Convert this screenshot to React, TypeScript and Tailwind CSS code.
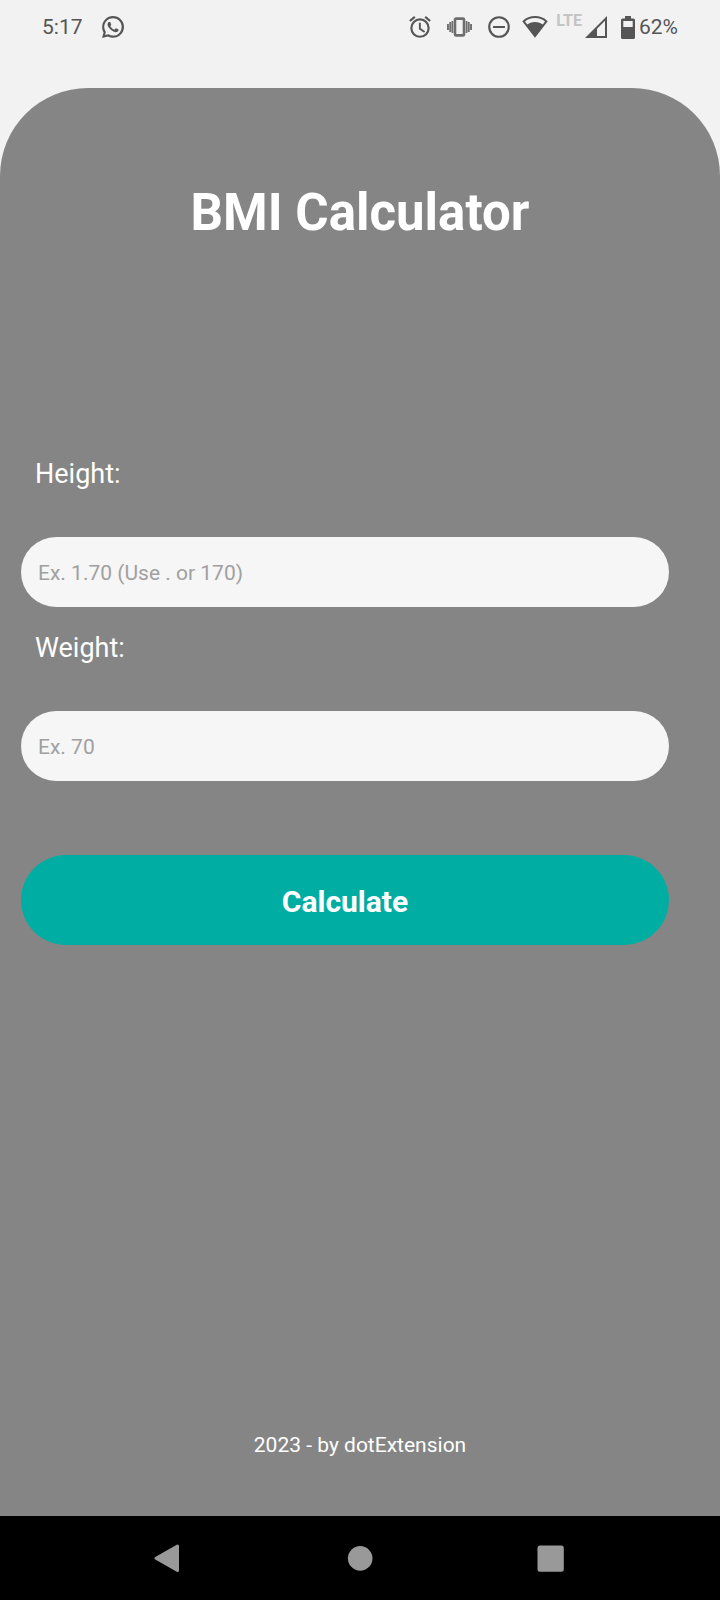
import { useState } from "react";
import type { FormEvent } from "react";

function WhatsAppIcon() {
  return (
    <svg viewBox="0 0 24 24" className="size-[22px]" fill="currentColor" aria-hidden="true">
      <path d="M12.05 0A11.9 11.9 0 0 0 .16 11.9c0 2.1.55 4.14 1.59 5.94L.06 24l6.3-1.65a11.9 11.9 0 0 0 5.69 1.45A11.9 11.9 0 1 0 12.05 0Zm0 21.4a9.8 9.8 0 0 1-5.03-1.38l-.36-.21-3.3.86.88-3.2-.24-.38a9.5 9.5 0 1 1 8.05 4.31Z" />
      <path d="M17.5 14.4c-.3-.15-1.76-.87-2.03-.97-.27-.1-.47-.15-.67.15-.2.3-.77.97-.94 1.16-.17.2-.35.22-.64.08-.3-.15-1.26-.46-2.39-1.48-.88-.79-1.48-1.76-1.65-2.06-.17-.3-.02-.46.13-.6.13-.14.3-.35.44-.53.15-.17.2-.3.3-.49.1-.2.05-.37-.03-.52-.07-.15-.67-1.61-.91-2.2-.24-.59-.49-.51-.67-.52h-.57c-.2 0-.52.07-.8.37-.26.3-1.03 1.02-1.03 2.48s1.06 2.88 1.21 3.07c.15.2 2.1 3.2 5.08 4.49.7.3 1.26.49 1.69.62.71.23 1.36.2 1.87.12.57-.09 1.76-.72 2-1.41.25-.7.25-1.29.18-1.42-.08-.12-.27-.19-.57-.34Z" />
    </svg>
  );
}

function AlarmIcon() {
  return (
    <svg viewBox="0 0 24 24" className="size-[26px]" fill="currentColor" aria-hidden="true">
      <path d="m22 5.720-4.600-3.860-1.290 1.530 4.600 3.860L22 5.720ZM7.880 3.390 6.600 1.860 2 5.710l1.290 1.530 4.590-3.850ZM12.750 8H11v6l4.750 3.400 1-1.500-4-2.800V8ZM12 4a9 9 0 1 0 0 18 9 9 0 0 0 0-18Zm0 16a7 7 0 1 1 0-14 7 7 0 0 1 0 14Z" />
    </svg>
  );
}

function VibrateIcon() {
  return (
    <svg viewBox="0 0 25 20" className="h-5 w-[25px]" aria-hidden="true">
      <rect x="8" y="1.600" width="9" height="16.800" rx="1" fill="none" stroke="#6e6e6e" strokeWidth="2.600" />
      <path
        d="M0 7h1.900v6H0ZM2.300 5h1.900v10H2.300ZM4.600 4h1.700v12H4.600ZM18.700 4h1.700v12h-1.700ZM20.800 5h1.900v10h-1.900ZM23.100 7H25v6h-1.900Z"
        fill="#6e6e6e"
      />
    </svg>
  );
}

function DoNotDisturbIcon() {
  return (
    <svg viewBox="0 0 24 24" className="size-[26px]" fill="currentColor" aria-hidden="true">
      <path d="M6.500 11.100v1.800h11v-1.800h-11Zm5.500-9.100a10 10 0 1 0 0 20 10 10 0 0 0 0-20Zm0 18a8 8 0 1 1 0-16 8 8 0 0 1 0 16Z" />
    </svg>
  );
}

function WifiIcon() {
  return (
    <svg viewBox="0 0 26 22" className="h-[22px] w-[26px]" aria-hidden="true">
      <path
        d="M1.600 5.400C4.600 2.600 8.600 1.100 13 1.100s8.400 1.500 11.400 4.300L13 20.100Z"
        fill="none"
        stroke="currentColor"
        strokeWidth="2"
      />
      <path d="M4.600 9C7 7 9.900 5.900 13 5.900S19 7 21.400 9L13 20.500Z" fill="currentColor" />
    </svg>
  );
}

function SignalIcon() {
  return (
    <svg viewBox="0 0 22 22" className="size-[22px]" aria-hidden="true">
      <path d="M22 0v22H0Zm-2 4.800L12 12.800V20h8Z" fill="currentColor" fillRule="evenodd" />
    </svg>
  );
}

function BatteryIcon() {
  return (
    <svg viewBox="0 0 14 23" className="h-[23px] w-[14px]" aria-hidden="true">
      <path
        d="M4 0h6v2.500h2.500A1.500 1.500 0 0 1 14 4v17.500a1.500 1.500 0 0 1-1.500 1.500h-11A1.500 1.500 0 0 1 0 21.500V4a1.500 1.500 0 0 1 1.500-1.500H4ZM2.300 5v6h9.400V5Z"
        fill="currentColor"
        fillRule="evenodd"
      />
    </svg>
  );
}

function StatusBar() {
  return (
    <header className="flex h-[54px] items-center justify-between px-[42px] text-[21px] leading-6 text-[#555555]">
      <div className="flex items-center gap-[19px]">
        <span>5:17</span>
        <WhatsAppIcon />
      </div>
      <div className="flex items-center">
        <div className="flex items-center gap-[14px]">
          <AlarmIcon />
          <VibrateIcon />
          <DoNotDisturbIcon />
        </div>
        <div className="ml-[10px] flex items-center gap-2">
          <WifiIcon />
          <span className="self-start text-[16px] leading-[10px] font-bold text-[#c4c4c4]">LTE</span>
        </div>
        <div className="ml-[3px] flex items-center gap-[14px]">
          <SignalIcon />
          <div className="flex items-center gap-1">
            <BatteryIcon />
            <span>62%</span>
          </div>
        </div>
      </div>
    </header>
  );
}

type FieldProps = {
  id: string;
  label: string;
  placeholder: string;
  value: string;
  onChange: (value: string) => void;
};

function Field({ id, label, placeholder, value, onChange }: FieldProps) {
  return (
    <div className="flex flex-col">
      <label htmlFor={id} className="pl-[14px] text-[27px] leading-8 text-white">
        {label}
      </label>
      <input
        id={id}
        type="text"
        inputMode="decimal"
        placeholder={placeholder}
        value={value}
        onChange={(event) => onChange(event.target.value)}
        className="mt-[47px] h-[70px] w-full rounded-full bg-[#f6f6f6] px-[17px] pt-[2px] text-[21px] text-[#333333] outline-none placeholder:text-[#a0a0a0]"
      />
    </div>
  );
}

function NavigationBar() {
  return (
    <nav className="flex h-[84px] items-center justify-between bg-black pr-[155px] pl-[153px] text-[#999999]">
      <button type="button" aria-label="Back">
        <svg viewBox="0 0 28 28" className="size-7" aria-hidden="true">
          <path
            d="M24.500 2v24.500L3 14.200Z"
            fill="currentColor"
            stroke="currentColor"
            strokeWidth="3"
            strokeLinejoin="round"
          />
        </svg>
      </button>
      <button type="button" aria-label="Home">
        <svg viewBox="0 0 28 28" className="size-7" aria-hidden="true">
          <circle cx="15.200" cy="14.400" r="12.300" fill="currentColor" />
        </svg>
      </button>
      <button type="button" aria-label="Recent apps">
        <svg viewBox="0 0 28 28" className="size-7" aria-hidden="true">
          <rect x=".5" y="1.400" width="26.300" height="26.300" rx="2.500" fill="currentColor" />
        </svg>
      </button>
    </nav>
  );
}

export default function App() {
  const [height, setHeight] = useState("");
  const [weight, setWeight] = useState("");
  const [bmi, setBmi] = useState<number | null>(null);

  function calculate(event: FormEvent) {
    event.preventDefault();
    const rawHeight = Number(height.replace(",", "."));
    const kilos = Number(weight.replace(",", "."));
    const metres = rawHeight > 3 ? rawHeight / 100 : rawHeight;
    setBmi(metres > 0 && kilos > 0 ? kilos / (metres * metres) : null);
  }

  return (
    <div className="flex min-h-screen flex-col bg-[#f2f2f2] font-['Roboto',sans-serif]">
      <StatusBar />
      <main className="mt-[34px] flex flex-1 flex-col rounded-t-[88px] bg-[#858585] pt-[95px]">
        <h1 className="text-center text-[51px] leading-[60px] font-bold text-white">BMI Calculator</h1>
        <form onSubmit={calculate} className="mt-[215px] mr-[51px] ml-[21px] flex flex-col">
          <div className="flex flex-col gap-[25px]">
            <Field
              id="height"
              label="Height:"
              placeholder="Ex. 1.70 (Use . or 170)"
              value={height}
              onChange={setHeight}
            />
            <Field id="weight" label="Weight:" placeholder="Ex. 70" value={weight} onChange={setWeight} />
          </div>
          <button
            type="submit"
            className="mt-[74px] h-[90px] rounded-full bg-[#00ada3] pt-[2px] text-[30px] font-bold text-white"
          >
            Calculate
          </button>
        </form>
        {bmi !== null && (
          <output className="mt-10 text-center text-[30px] text-white">{bmi.toFixed(2)}</output>
        )}
        <footer className="mt-auto pb-[59px] text-center text-[21px] leading-6 text-white">
          2023 - by dotExtension
        </footer>
      </main>
      <NavigationBar />
    </div>
  );
}
